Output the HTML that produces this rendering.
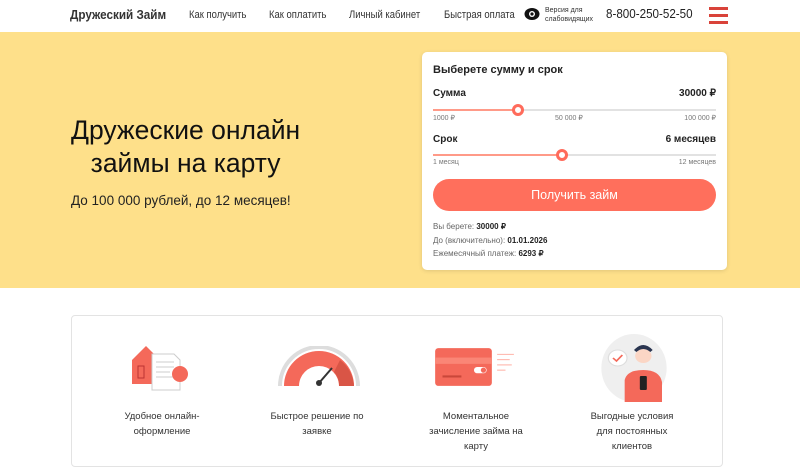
<!DOCTYPE html>
<html><head><meta charset="utf-8"><style>
*{margin:0;padding:0;box-sizing:border-box}
body{width:800px;height:472px;overflow:hidden;background:#fff;font-family:"Liberation Sans",sans-serif;color:#222;position:relative}
.abs{position:absolute;white-space:nowrap}
.nav{font-size:11px;color:#333;top:9px;transform:scaleX(.86);transform-origin:left}
.hero{position:absolute;left:0;top:32px;width:800px;height:256px;background:#fee08a}
.card{position:absolute;left:422px;top:52px;width:305px;height:218px;background:#fff;border-radius:5px;box-shadow:0 1px 4px rgba(0,0,0,.12)}
.card .abs{font-size:10px}
.b{font-weight:bold}
.track{position:absolute;height:2px;background:#e2e2e2;left:11px;width:283px}
.fill{position:absolute;height:2px;background:#ff9a88;left:0;top:0}
.knob{position:absolute;width:12px;height:12px;border-radius:50%;background:#fff;border:3.5px solid #ff6b5b;top:-5px}
.sm{font-size:7px!important;color:#777}
.btn{position:absolute;left:11px;top:127px;width:283px;height:32px;border-radius:16px;background:#ff6f5c;color:#fff;font-size:12.5px;text-align:center;line-height:32px}
.info{font-size:8px!important;color:#666}
.info b{color:#222}
.feat{position:absolute;left:71px;top:315px;width:652px;height:152px;border:1px solid #e3e3e3;border-radius:4px}
.ft{position:absolute;font-size:9.5px;color:#333;text-align:center;line-height:15px;width:130px}
</style></head><body>
<div class="abs b" style="left:70px;top:7px;font-size:13px;color:#333;transform:scaleX(.9);transform-origin:left">Дружеский Займ</div>
<div class="abs nav" style="left:189px">Как получить</div>
<div class="abs nav" style="left:269px">Как оплатить</div>
<div class="abs nav" style="left:349px">Личный кабинет</div>
<div class="abs nav" style="left:444px">Быстрая оплата</div>
<svg class="abs" style="left:524px;top:7px" width="16" height="14" viewBox="0 0 16 14"><ellipse cx="8" cy="7" rx="7.5" ry="6" fill="#111"/><circle cx="8" cy="7" r="3" fill="#fff"/><circle cx="8" cy="7" r="1.6" fill="#111"/></svg>
<div class="abs" style="left:545px;top:6px;font-size:7px;line-height:9px;color:#333">Версия для<br>слабовидящих</div>
<div class="abs" style="left:606px;top:7px;font-size:12.5px;color:#222;transform:scaleX(.93);transform-origin:left">8-800-250-52-50</div>
<div class="abs" style="left:709px;top:7px;width:19px;height:3px;background:#d9433a;box-shadow:0 7px 0 #d9433a,0 14px 0 #d9433a"></div>

<div class="hero"></div>
<div class="abs" style="left:71px;top:114px;font-size:26.5px;line-height:33px;color:#111;text-align:center">Дружеские онлайн<br><span style="padding-left:0">займы на карту</span></div>
<div class="abs" style="left:71px;top:193px;font-size:13.5px;color:#222">До 100 000 рублей, до 12 месяцев!</div>

<div class="card">
<div class="abs b" style="left:11px;top:12px;font-size:11px">Выберете сумму и срок</div>
<div class="abs b" style="left:11px;top:36px">Сумма</div>
<div class="abs b" style="right:11px;top:36px">30000 ₽</div>
<div class="track" style="top:57px"><div class="fill" style="width:85px"></div><div class="knob" style="left:79px"></div></div>
<div class="abs sm" style="left:11px;top:62px">1000 ₽</div>
<div class="abs sm" style="left:133px;top:62px">50 000 ₽</div>
<div class="abs sm" style="right:11px;top:62px">100 000 ₽</div>
<div class="abs b" style="left:11px;top:82px">Срок</div>
<div class="abs b" style="right:11px;top:82px">6 месяцев</div>
<div class="track" style="top:102px"><div class="fill" style="width:129px"></div><div class="knob" style="left:123px"></div></div>
<div class="abs sm" style="left:11px;top:107px">1 месяц</div>
<div class="abs sm" style="right:11px;top:107px">12 месяцев</div>
<div class="btn">Получить займ</div>
<div class="abs info" style="left:11px;top:170px">Вы берете: <b>30000 ₽</b></div>
<div class="abs info" style="left:11px;top:184px">До (включительно): <b>01.01.2026</b></div>
<div class="abs info" style="left:11px;top:197px">Ежемесячный платеж: <b>6293 ₽</b></div>
</div>

<div class="feat">
<svg class="abs" style="left:58px;top:28px" width="64" height="48" viewBox="0 0 64 48"><path d="M2 16 L16 2 L30 16 V40 H2Z" fill="#f4695a"/><rect x="8" y="22" width="6" height="12" fill="none" stroke="#b33" stroke-width="1"/><path d="M22 10 H44 L50 16 V46 H22Z" fill="#fff" stroke="#ccc"/><g stroke="#ccc"><line x1="26" y1="18" x2="44" y2="18"/><line x1="26" y1="23" x2="44" y2="23"/><line x1="26" y1="28" x2="40" y2="28"/><line x1="26" y1="33" x2="44" y2="33"/></g><circle cx="50" cy="30" r="8" fill="#f4695a"/></svg>
<svg class="abs" style="left:206px;top:30px" width="82" height="42" viewBox="0 0 82 42"><path d="M2 40 A39 39 0 0 1 80 40" fill="none" stroke="#ddd" stroke-width="4"/><path d="M6 40 A35 35 0 0 1 76 40 H61 A20 20 0 0 0 21 40Z" fill="#f4695a"/><path d="M62 14 A35 35 0 0 1 76 40 H61 A20 20 0 0 0 56 26Z" fill="#d95546"/><line x1="41" y1="37" x2="54" y2="22" stroke="#333" stroke-width="2"/><circle cx="41" cy="37" r="3" fill="#333"/></svg>
<svg class="abs" style="left:360px;top:30px" width="84" height="42" viewBox="0 0 80 40"><rect x="3" y="2" width="54" height="36" rx="3" fill="#f4695a"/><rect x="3" y="11" width="54" height="6" fill="#fa8676"/><rect x="10" y="28" width="18" height="2" fill="#c9473a"/><rect x="40" y="20" width="12" height="6" rx="3" fill="#fff"/><circle cx="49" cy="23" r="2.5" fill="#f4695a"/><g stroke="#ffb3a8"><line x1="62" y1="8" x2="78" y2="8"/><line x1="62" y1="13" x2="74" y2="13"/><line x1="62" y1="18" x2="76" y2="18"/><line x1="62" y1="23" x2="70" y2="23"/></g></svg>
<svg class="abs" style="left:527px;top:16px" width="70" height="72" viewBox="0 0 60 72" preserveAspectRatio="none"><ellipse cx="30" cy="36" rx="28" ry="34" fill="#efefef"/><circle cx="16" cy="26" r="8" fill="#fff" stroke="#ddd"/><path d="M12 26 l3 3 l5 -6" stroke="#f4695a" stroke-width="1.5" fill="none"/><circle cx="38" cy="24" r="7" fill="#fbd6c5"/><path d="M30 18 Q38 8 46 18 L44 20 Q38 14 32 20Z" fill="#2a3550"/><path d="M22 70 V48 Q24 38 38 38 Q52 38 54 50 V70Z" fill="#f4695a"/><rect x="35" y="44" width="6" height="14" rx="1" fill="#222"/></svg>
<div class="ft" style="left:25px;top:93px">Удобное онлайн-<br>оформление</div>
<div class="ft" style="left:180px;top:93px">Быстрое решение по<br>заявке</div>
<div class="ft" style="left:339px;top:93px">Моментальное<br>зачисление займа на<br>карту</div>
<div class="ft" style="left:495px;top:93px">Выгодные условия<br>для постоянных<br>клиентов</div>
</div>
</body></html>
